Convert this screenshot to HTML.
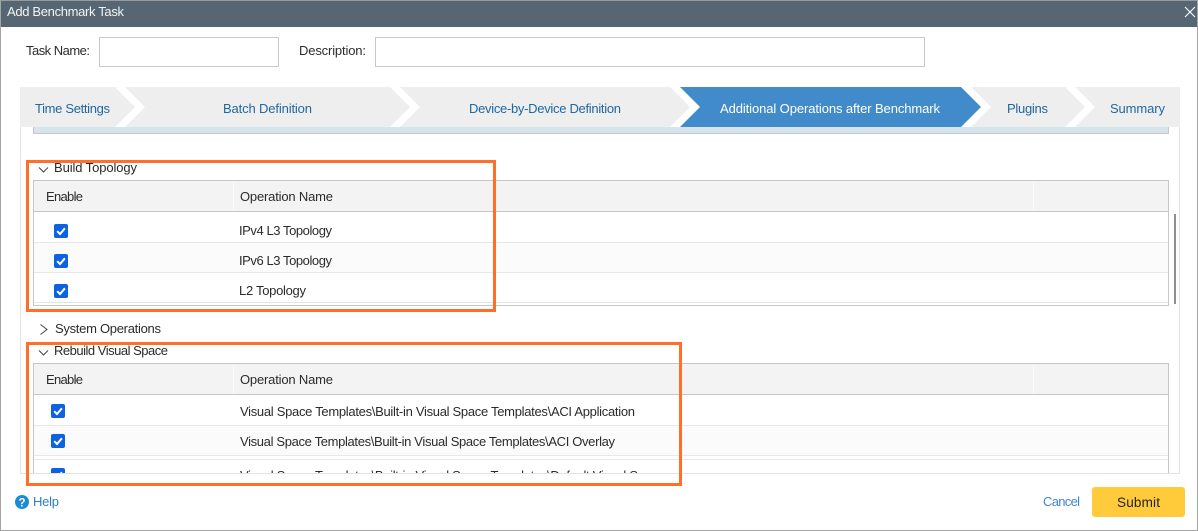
<!DOCTYPE html>
<html><head><meta charset="utf-8"><style>
html,body{margin:0;padding:0;background:#fff;width:1198px;height:531px;overflow:hidden}
svg{display:block}
text{font-family:"Liberation Sans",sans-serif;font-size:13px;fill:#2b2b2b}
.t{fill:#20689f}
.r{shape-rendering:crispEdges}
</style></head><body>
<svg width="1198" height="531" viewBox="0 0 1198 531" xmlns="http://www.w3.org/2000/svg">
<defs>
<clipPath id="c1"><rect x="0" y="127" width="1198" height="346"/></clipPath>
<g id="cb"><rect x="0" y="0" width="14" height="14" rx="2" fill="#0d62e0"/><path d="M3.2 7.2 L6 10 L10.9 4.3" fill="none" stroke="#fff" stroke-width="2"/></g>
</defs>
<g class="r">
<rect width="1198" height="531" fill="#fff"/>
<rect x="0" y="0" width="1198" height="1" fill="#9a9a9a"/>
<rect x="0" y="0" width="1" height="531" fill="#a5a5a5"/>
<rect x="1197" y="0" width="1" height="531" fill="#a5a5a5"/>
<rect x="0" y="530" width="1198" height="1" fill="#a5a5a5"/>
<rect x="1" y="1" width="1196" height="26" fill="#566773"/>
<rect x="99.500" y="37.500" width="179" height="29" fill="#fff" stroke="#c8c8c8"/>
<rect x="375.500" y="37.500" width="549" height="29" fill="#fff" stroke="#c8c8c8"/>
</g>
<text x="7" y="16" textLength="117" lengthAdjust="spacing" style="fill:#f2f4f5">Add Benchmark Task</text>
<path d="M1185 7 L1195 17 M1195 7 L1185 17" stroke="#fff" stroke-width="1.100" fill="none"/>
<text x="26" y="55" textLength="64" lengthAdjust="spacing">Task Name:</text>
<text x="299" y="55" textLength="67" lengthAdjust="spacing">Description:</text>

<path d="M20 87 H115 L135 107 L115 127 H20 Z" fill="#eeeeee"/>
<path d="M125 87 H390 L410 107 L390 127 H125 L145 107 Z" fill="#eeeeee"/>
<path d="M400 87 H670 L690 107 L670 127 H400 L420 107 Z" fill="#eeeeee"/>
<path d="M680 87 H961 L981 107 L961 127 H680 L700 107 Z" fill="#418bcb"/>
<path d="M971 87 H1065 L1085 107 L1065 127 H971 L991 107 Z" fill="#eeeeee"/>
<path d="M1075 87 H1180 V127 H1075 L1095 107 Z" fill="#eeeeee"/>
<text class="t" x="35" y="113" textLength="75" lengthAdjust="spacing">Time Settings</text>
<text class="t" x="223" y="113" textLength="89" lengthAdjust="spacing">Batch Definition</text>
<text class="t" x="469" y="113" textLength="152" lengthAdjust="spacing">Device-by-Device Definition</text>
<text x="720" y="113" textLength="220" lengthAdjust="spacing" style="fill:#fff">Additional Operations after Benchmark</text>
<text class="t" x="1007" y="113" textLength="41" lengthAdjust="spacing">Plugins</text>
<text class="t" x="1110" y="113" textLength="55" lengthAdjust="spacing">Summary</text>

<g class="r">
<rect x="20" y="127" width="1" height="347" fill="#e3e3e3"/>
<rect x="1179" y="127" width="1" height="347" fill="#e3e3e3"/>
<rect x="33" y="127" width="1136" height="6" fill="#d6e5ec"/>
<rect x="33" y="127" width="1" height="7" fill="#c8c8c8"/>
<rect x="1168" y="127" width="1" height="7" fill="#c8c8c8"/>
<rect x="33" y="133" width="1136" height="1" fill="#c8c8c8"/>

<rect x="33" y="180" width="1136" height="32" fill="#f3f3f3"/>
<rect x="33" y="180" width="1136" height="1" fill="#c6c6c6"/>
<rect x="33" y="211" width="1136" height="1" fill="#c6c6c6"/>
<rect x="233" y="181" width="1" height="30" fill="#fafafa"/>
<rect x="1033" y="181" width="1" height="30" fill="#fafafa"/>
<rect x="33" y="243" width="1136" height="30" fill="#fbfbfb"/>
<rect x="33" y="242" width="1136" height="1" fill="#e8e8e8"/>
<rect x="33" y="272" width="1136" height="1" fill="#e8e8e8"/>
<rect x="33" y="302" width="1136" height="1" fill="#e4e4e4"/>
<rect x="33" y="305" width="1136" height="1" fill="#c6c6c6"/>
<rect x="33" y="180" width="1" height="126" fill="#c6c6c6"/>
<rect x="1168" y="180" width="1" height="126" fill="#c6c6c6"/>
<rect x="1174" y="214" width="2" height="90" fill="#8c908e"/>

<rect x="33" y="363" width="1136" height="32" fill="#f3f3f3"/>
<rect x="33" y="363" width="1136" height="1" fill="#c6c6c6"/>
<rect x="33" y="394" width="1136" height="1" fill="#c6c6c6"/>
<rect x="233" y="364" width="1" height="30" fill="#fafafa"/>
<rect x="1033" y="364" width="1" height="30" fill="#fafafa"/>
<rect x="33" y="426" width="1136" height="30" fill="#fbfbfb"/>
<rect x="33" y="425" width="1136" height="1" fill="#e8e8e8"/>
<rect x="33" y="455" width="1136" height="1" fill="#e8e8e8"/>
<rect x="33" y="459" width="1136" height="1" fill="#e8e8e8"/>
<rect x="33" y="363" width="1" height="110" fill="#c6c6c6"/>
<rect x="1168" y="363" width="1" height="110" fill="#c6c6c6"/>
</g>

<path d="M39 167.500 L43.500 172 L48 167.500" fill="none" stroke="#444" stroke-width="1"/>
<text x="54" y="172" textLength="83" lengthAdjust="spacing">Build Topology</text>
<text x="46" y="201" textLength="37" lengthAdjust="spacing">Enable</text>
<text x="240" y="201" textLength="93" lengthAdjust="spacing">Operation Name</text>
<use href="#cb" x="54" y="224"/>
<use href="#cb" x="54" y="254"/>
<use href="#cb" x="54" y="284"/>
<text x="239" y="235" textLength="93" lengthAdjust="spacing">IPv4 L3 Topology</text>
<text x="239" y="265" textLength="93" lengthAdjust="spacing">IPv6 L3 Topology</text>
<text x="239" y="295" textLength="67" lengthAdjust="spacing">L2 Topology</text>

<path d="M40.500 324.500 L47 329.500 L40.500 334.500" fill="none" stroke="#444" stroke-width="1"/>
<text x="55" y="333" textLength="106" lengthAdjust="spacing">System Operations</text>

<path d="M39 350.500 L43.500 355 L48 350.500" fill="none" stroke="#444" stroke-width="1"/>
<text x="54" y="355" textLength="114" lengthAdjust="spacing">Rebuild Visual Space</text>
<text x="46" y="384" textLength="37" lengthAdjust="spacing">Enable</text>
<text x="240" y="384" textLength="93" lengthAdjust="spacing">Operation Name</text>
<use href="#cb" x="51" y="404"/>
<use href="#cb" x="51" y="434"/>
<text x="240" y="416" textLength="395" lengthAdjust="spacing">Visual Space Templates\Built-in Visual Space Templates\ACI Application</text>
<text x="240" y="446" textLength="375" lengthAdjust="spacing">Visual Space Templates\Built-in Visual Space Templates\ACI Overlay</text>
<g clip-path="url(#c1)">
<use href="#cb" x="51" y="468"/>
<text x="240" y="480" textLength="398" lengthAdjust="spacing">Visual Space Templates\Built-in Visual Space Templates\Default Visual S</text>
</g>
<rect class="r" x="20" y="473" width="1160" height="1" fill="#e3e3e3"/>

<circle cx="22" cy="502" r="7" fill="#1c8bd6"/>
<text x="22" y="506.500" text-anchor="middle" style="fill:#fff;font-size:11.500px;font-weight:bold">?</text>
<text x="33" y="506" textLength="26" lengthAdjust="spacing" style="fill:#2f7fc0">Help</text>
<text x="1043" y="506" textLength="37" lengthAdjust="spacing" style="fill:#3f87cc">Cancel</text>
<rect x="1092" y="487" width="93" height="30" rx="3" fill="#ffcb3b"/>
<text x="1117" y="507" textLength="43" lengthAdjust="spacing" style="fill:#222;font-size:13.500px">Submit</text>

<g class="r" fill="#ff6f2a">
<rect x="26" y="160" width="470" height="3"/>
<rect x="26" y="309" width="470" height="3"/>
<rect x="26" y="160" width="3" height="152"/>
<rect x="493" y="160" width="3" height="152"/>
<rect x="26" y="342" width="656" height="3"/>
<rect x="26" y="483" width="656" height="3"/>
<rect x="26" y="342" width="3" height="144"/>
<rect x="679" y="342" width="3" height="144"/>
</g>
</svg>
</body></html>
